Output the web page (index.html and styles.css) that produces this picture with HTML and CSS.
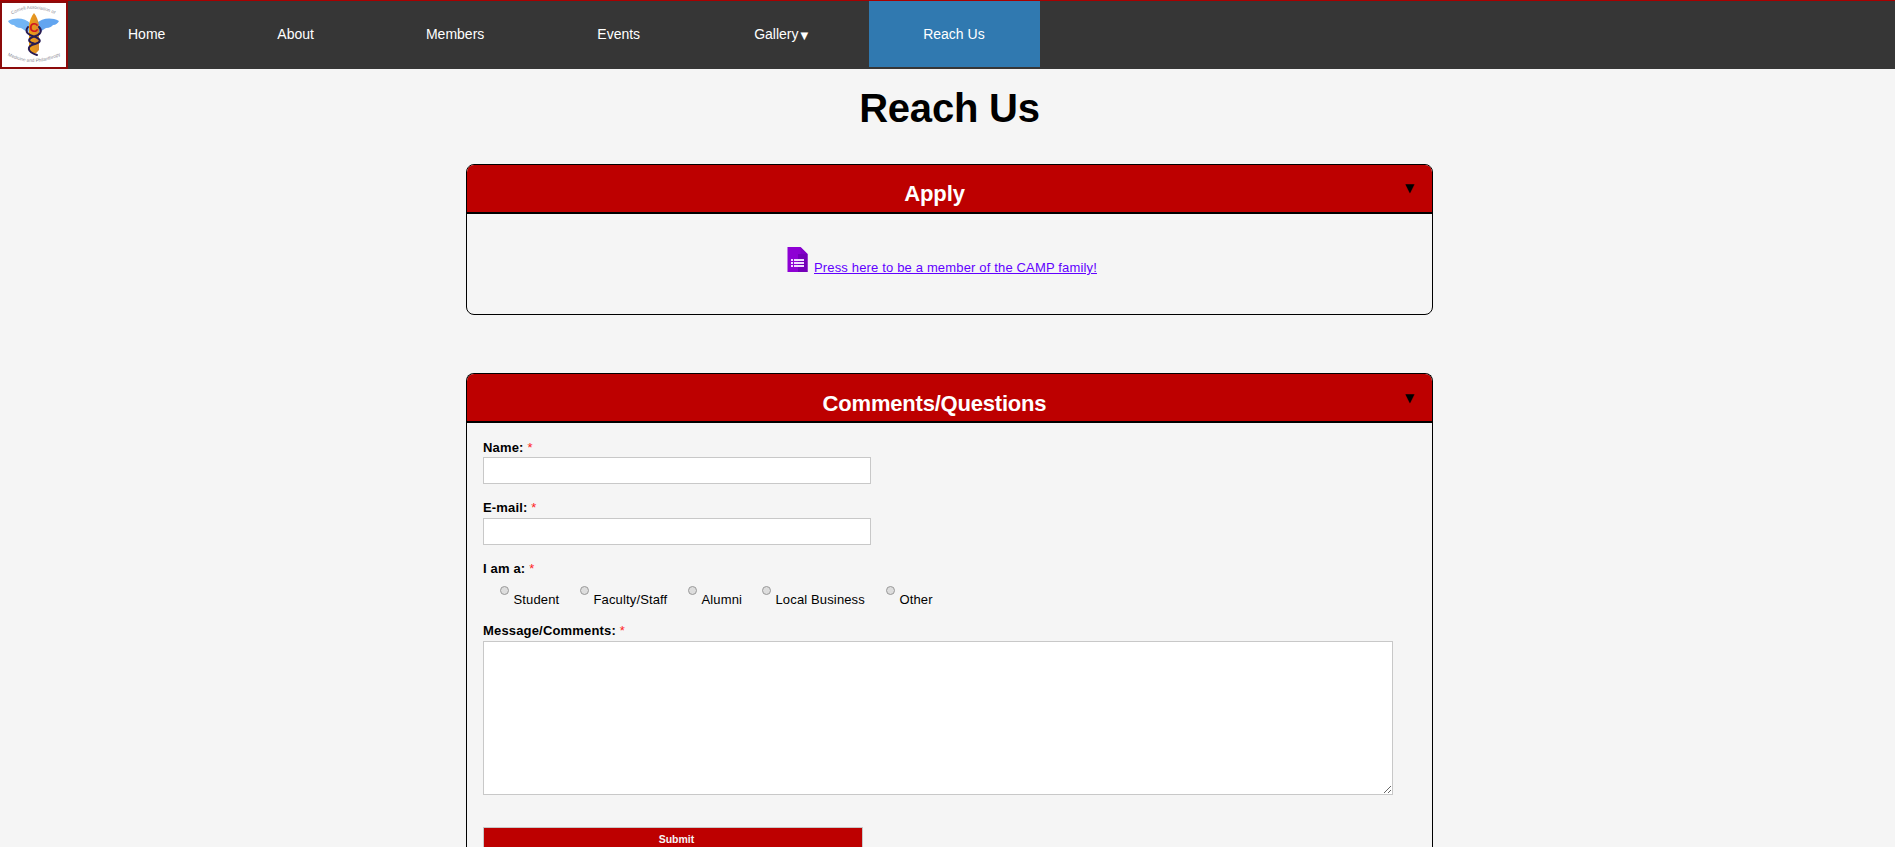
FILE: index.html
```
<!DOCTYPE html>
<html lang="en">
<head>
<meta charset="utf-8">
<title>Reach Us</title>
<link rel="stylesheet" href="styles.css">
</head>
<body>
<nav class="nav">
  <a class="logo" href="#">
    <svg width="68" height="68" viewBox="0 0 68 68">
      <defs>
        <path id="arc-top" d="M12 13.500 Q33 1.500 58 15"/>
        <path id="arc-bottom" d="M7.500 54.500 Q34 68 62 53.500"/>
        <linearGradient id="staff" x1="0" x2="1"><stop offset="0" stop-color="#f0a010"/><stop offset="1" stop-color="#d98a30"/></linearGradient>
      </defs>
      <rect width="68" height="68" fill="#8c0a0a"/>
      <rect x="2" y="2" width="64" height="64" fill="#fff"/>
      <path d="M8 20 C16 16 25 17 31 23 V31 C26 31 23 28 21 27 C17 27 15 25 14 24 C11 24 9 22 8 20Z" fill="#72b5f5"/>
      <path d="M59 20 C51 16 42 17 36 23 V31 C41 31 44 28 46 27 C50 27 52 25 53 24 C56 24 58 22 59 20Z" fill="#62a5f0"/>
      <path d="M34 12 C31 16 30 19 29 24 L29 49 Q34 56 39 49 L39 24 C38 19 37 16 34 12Z" fill="url(#staff)"/>
      <path d="M28 26 C24 31 29 34 34 35.500 C41 38 42 41 35 43 C26 45 27 51 37 54 M39 26 C43 30 40 34 34 35.500 C27 38 28 41 34 42.500" fill="none" stroke="#281b52" stroke-width="2" stroke-linecap="round"/>
      <text x="34" y="31" text-anchor="middle" class="logo-c">C</text>
      <text class="logo-text"><textPath href="#arc-top">Cornell Association of</textPath></text>
      <text class="logo-text logo-text-wide"><textPath href="#arc-bottom">Medicine and Philanthropy</textPath></text>
    </svg>
  </a>
  <a class="nav-item" href="#">Home</a>
  <a class="nav-item" href="#">About</a>
  <a class="nav-item" href="#">Members</a>
  <a class="nav-item nav-events" href="#">Events</a>
  <a class="nav-item nav-gallery" href="#">Gallery<span class="caret">▼</span></a>
  <a class="nav-item active" href="#">Reach Us</a>
</nav>
<main class="main">
  <h1 class="title">Reach Us</h1>
  <section class="panel panel-apply">
    <header class="panel-head"><h2 class="panel-title">Apply</h2><span class="toggle">▼</span></header>
    <div class="apply">
      <svg class="form-icon" width="21" height="25" viewBox="0 0 21 25">
        <path d="M0.500 0 H13.500 L20.500 7 V25 H0.500Z" fill="#8e00d4"/>
        <path d="M11 7 H20.500 V25 H11Z" fill="#7400b8"/>
        <path d="M13.500 0 L20.500 7 H13.500Z" fill="#8100c8"/>
        <path d="M4 12h2v2H4zM4 15h2v2H4zM4 18h2v2H4zM7 12h10v2H7zM7 15h10v2H7zM7 18h10v2H7z" fill="#f0dcff"/>
      </svg>
      <a class="apply-link" href="#">Press here to be a member of the CAMP family!</a>
    </div>
  </section>
  <section class="panel panel-comments">
    <header class="panel-head"><h2 class="panel-title panel-title-tight">Comments/Questions</h2><span class="toggle">▼</span></header>
    <form class="form">
      <label class="label" for="name">Name: <span class="req">*</span></label>
      <input class="field" id="name" type="text">
      <label class="label label-email" for="email">E-mail: <span class="req">*</span></label>
      <input class="field" id="email" type="text">
      <div class="label label-role">I am a: <span class="req">*</span></div>
      <div class="roles">
        <label class="role"><i class="radio"></i><span>Student</span></label>
        <label class="role"><i class="radio"></i><span>Faculty/Staff</span></label>
        <label class="role"><i class="radio"></i><span>Alumni</span></label>
        <label class="role"><i class="radio"></i><span>Local Business</span></label>
        <label class="role"><i class="radio"></i><span>Other</span></label>
      </div>
      <label class="label label-message" for="message">Message/Comments: <span class="req">*</span></label>
      <textarea class="message" id="message"></textarea>
      <button class="submit" type="button">Submit</button>
    </form>
  </section>
</main>
</body>
</html>
```
FILE: styles.css
```
* { box-sizing: border-box; }
html { height: 100%; overflow: hidden; }
body {
  margin: 0;
  height: 100%;
  overflow: hidden;
  background: #f5f5f5;
  color: #000;
  font-family: "Liberation Sans", Arial, sans-serif;
  font-size: 13px;
}
.nav {
  display: flex;
  align-items: flex-start;
  gap: 4px;
  height: 69px;
  background: #363636;
  border-top: 1px solid #a80000;
}
.logo { width: 68px; height: 68px; margin-right: 2px; }
.logo svg { display: block; }
.logo-c { font: bold 13px "Liberation Sans", Arial, sans-serif; fill: #d01820; }
.logo-text { font: 4.6px "Liberation Sans", Arial, sans-serif; fill: #8a8a94; }
.logo-text-wide { font-size: 4.7px; }
.nav-item {
  height: 66px;
  padding: 0 54px;
  color: #fff;
  font-size: 14px;
  line-height: 66px;
  text-decoration: none;
  white-space: nowrap;
}
.nav-events { margin-left: 1px; }
.nav-gallery { margin: 0 4px 0 2px; }
.active { padding-right: 55px; background: #3079b0; }
.caret { display: inline-block; margin-left: 2px; font: 10px/10px "DejaVu Sans", sans-serif; }
.nav-gallery { margin-right: 3px; }
.main { width: 967px; height: 778px; margin-left: 466px; display: flex; flex-direction: column; }
.title { margin: 16px 0 33px; font-size: 40px; line-height: 46px; text-align: center; letter-spacing: -0.2px; }
.panel {
  border: 1px solid #000;
  border-radius: 8px;
  overflow: hidden;
}
.panel-apply { height: 151px; margin-bottom: 58px; flex: none; }
.panel-comments { flex: 1; min-height: 0; border-bottom: 0; border-radius: 8px 8px 0 0; }
.panel-head {
  display: flex;
  height: 49px;
  background: #bd0000;
  border-bottom: 2px solid #000;
}
.panel-title {
  flex: 1;
  margin: 0;
  padding: 16px 3px 0 0;
  color: #fff;
  font-size: 22px;
  line-height: 26px;
  text-align: center;
  letter-spacing: -0.1px;
}
.panel-title-tight { padding-top: 17px; letter-spacing: -0.2px; }
.toggle { width: 27px; padding-top: 16px; font: 12px/15px "DejaVu Sans", sans-serif; }
.panel-comments .toggle { padding-top: 17px; }
.apply { display: flex; align-items: flex-start; gap: 6px; padding: 33px 0 0 320px; }
.apply-link { margin-top: 13px; line-height: 16px; color: #6200ff; letter-spacing: 0.16px; white-space: nowrap; }
.form { display: flex; flex-direction: column; align-items: flex-start; padding: 16px 16px 0; }
.label { padding-bottom: 1px; font-weight: bold; line-height: 17px; letter-spacing: 0.17px; }
.label-email { margin-top: 15px; margin-bottom: 1px; }
.label-role { margin-top: 15px; }
.label-message { padding-bottom: 2px; }
.req { font-weight: normal; color: #f22; }
.field { width: 388px; height: 27px; padding: 4px; border: 1px solid #c8c8c8; background: #fff; }
.roles { display: grid; grid-template-columns: 80px 108px 74px 124px auto; height: 44px; padding: 8px 0 0 17px; }
.role { display: flex; gap: 4.5px; white-space: nowrap; letter-spacing: 0.14px; }
.role span { padding-top: 6px; line-height: 16px; }
.radio { width: 9px; height: 9px; border: 1px solid #999; border-radius: 50%; background: #ddd; }
.message { width: 910px; height: 154px; flex: none; border: 1px solid #c8c8c8; background: #fff; resize: both; }
.submit {
  width: 380px;
  height: 20px;
  flex: none;
  margin-top: 32px;
  padding: 3px 0 0 7px;
  border: 1px solid #c8c8c8;
  border-bottom: 0;
  background: #bd0000;
  color: #f5f5f5;
  font: bold 10.5px/16px "Liberation Sans", Arial, sans-serif;
}
```
